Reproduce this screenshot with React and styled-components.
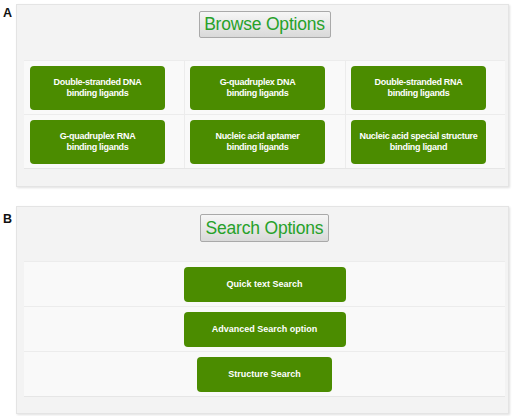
import React from 'react';
import styled, { createGlobalStyle } from 'styled-components';

const GlobalStyle = createGlobalStyle`
  html, body {
    margin: 0;
    padding: 0;
    background: #ffffff;
    font-family: "Liberation Sans", Arial, sans-serif;
  }
`;

const Page = styled.div`
  width: 520px;
  height: 416px;
  padding-top: 4px;
  box-sizing: border-box;
  display: flex;
  flex-direction: column;
  gap: 19px;
`;

const Section = styled.div`
  display: flex;
  align-items: flex-start;
`;

const Letter = styled.div`
  width: 16px;
  padding-left: 3px;
  box-sizing: border-box;
  margin-top: ${p => p.top}px;
  font-size: 12.5px;
  line-height: 14px;
  font-weight: bold;
  color: #111;
`;

const Panel = styled.div`
  width: 493px;
  height: ${p => p.height}px;
  box-sizing: border-box;
  background: #f3f3f3;
  border: 1px solid #e4e4e4;
  box-shadow: 1px 1px 2px rgba(0, 0, 0, 0.12);
  padding: ${p => p.top}px 3px 0 7px;
  display: flex;
  flex-direction: column;
  align-items: stretch;
`;

const Header = styled.div`
  display: flex;
  justify-content: center;
  margin-bottom: ${p => p.gap}px;
`;

const TitleButton = styled.div`
  width: ${p => p.width}px;
  height: ${p => p.height}px;
  box-sizing: border-box;
  border: 1px solid #a9a9a9;
  border-radius: 2px;
  background: linear-gradient(#f6f6f6, #d9d9d9);
  color: #27a12a;
  font-size: 17.5px;
  display: flex;
  align-items: center;
  justify-content: center;
  letter-spacing: -0.2px;
`;

const Grid = styled.div`
  display: grid;
  grid-template-columns: 160px 161px 160px;
  background: #f9f9f9;
  border-bottom: 1px solid #e6e6e6;
`;

const Cell = styled.div`
  height: 54px;
  box-sizing: border-box;
  padding: 5px 0 0 ${p => (p.col === 0 ? 6 : 5)}px;
  border-top: 1px solid #ececec;
  border-left: ${p => (p.col === 0 ? 'none' : '1px solid #ececec')};
`;

const GreenButton = styled.div`
  width: ${p => p.width}px;
  height: ${p => p.height}px;
  box-sizing: border-box;
  background: #4b8c00;
  border-radius: 4px;
  color: #ffffff;
  font-weight: bold;
  font-size: 9px;
  line-height: 11px;
  display: flex;
  align-items: center;
  justify-content: center;
  text-align: center;
  letter-spacing: ${p => p.spacing || 0}px;
`;

const List = styled.div`
  display: flex;
  flex-direction: column;
  background: #f9f9f9;
  border-bottom: 1px solid #e6e6e6;
`;

const ListRow = styled.div`
  height: 45px;
  box-sizing: border-box;
  border-top: 1px solid #ececec;
  display: flex;
  align-items: center;
  justify-content: center;
`;

const browse = [
  ['Double-stranded DNA', 'binding ligands'],
  ['G-quadruplex DNA', 'binding ligands'],
  ['Double-stranded RNA', 'binding ligands'],
  ['G-quadruplex RNA', 'binding ligands'],
  ['Nucleic acid aptamer', 'binding ligands'],
  ['Nucleic acid special structure', 'binding ligand'],
];

const search = [
  ['Quick text Search', 162],
  ['Advanced Search option', 162],
  ['Structure Search', 135],
];

export default function App() {
  return (
    <Page>
      <GlobalStyle />
      <Section>
        <Letter top={2}>A</Letter>
        <Panel height={183} top={6}>
          <Header gap={22}>
            <TitleButton width={132} height={27}>Browse Options</TitleButton>
          </Header>
          <Grid>
            {browse.map(([a, b], i) => (
              <Cell key={a} col={i % 3}>
                <GreenButton width={135} height={44} spacing={-0.3}>
                  {a}
                  <br />
                  {b}
                </GreenButton>
              </Cell>
            ))}
          </Grid>
        </Panel>
      </Section>
      <Section>
        <Letter top={6}>B</Letter>
        <Panel height={208} top={7}>
          <Header gap={19}>
            <TitleButton width={129} height={28}>Search Options</TitleButton>
          </Header>
          <List>
            {search.map(([label, w]) => (
              <ListRow key={label}>
                <GreenButton width={w} height={35}>
                  {label}
                </GreenButton>
              </ListRow>
            ))}
          </List>
        </Panel>
      </Section>
    </Page>
  );
}
